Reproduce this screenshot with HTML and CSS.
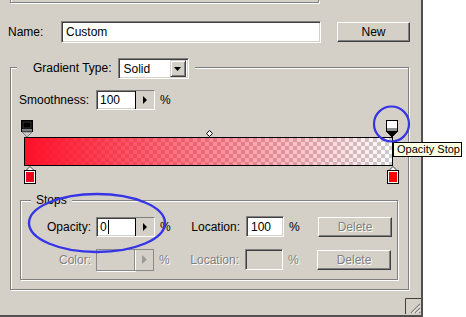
FILE: index.html
```html
<!DOCTYPE html>
<html lang="en">
<head>
    <meta charset="UTF-8">
    <title>Gradient Editor</title>
    <link rel="stylesheet" href="styles.css">
</head>
<body>
<div class="screen">
    <div class="dialog">
        <div class="prev"></div>

        <div class="name-row">
            <span class="name-lbl">Name:</span>
            <div class="field name-field">Custom</div>
            <div class="btn new">New</div>
        </div>

        <fieldset class="group">
            <legend class="type">
                <span class="type-lbl">Gradient Type:</span>
                <div class="field select">
                    <span>Solid</span>
                    <span class="drop">
                        <svg width="7" height="4" viewBox="0 0 7 4"><path d="M0 0h7L3.5 4z" fill="#000"/></svg>
                    </span>
                </div>
            </legend>

            <div class="smooth-row">
                <span class="smooth-lbl">Smoothness:</span>
                <div class="field spin">
                    <span class="val">100</span>
                    <span class="arrow"><svg width="4" height="8" viewBox="0 0 4 8"><path d="M0 0v8l4-4z" fill="#000"/></svg></span>
                </div>
                <span class="pct">%</span>
            </div>

            <div class="ramp">
                <!-- opacity stops -->
                <svg class="stop top-left" width="14" height="17" viewBox="0 0 14 17">
                    <rect x="1.5" y="0.5" width="11" height="11" fill="#000" stroke="#000"/>
                    <rect x="3" y="2" width="8" height="6" fill="#000" stroke="#555" stroke-width="0.6"/>
                    <rect x="2" y="9" width="10" height="2" fill="#808080"/>
                    <path d="M2 12h10l-5 5z" fill="#c8c8c8" stroke="#808080"/>
                </svg>
                <svg class="stop top-right" width="14" height="17" viewBox="0 0 14 17">
                    <rect x="1.5" y="0.5" width="11" height="11" fill="#fff" stroke="#000"/>
                    <rect x="2" y="8" width="10" height="3" fill="#909090"/>
                    <path d="M2 12h10l-5 5z" fill="#000" stroke="#000"/>
                </svg>
                <svg class="mid" width="7" height="7" viewBox="0 0 7 7">
                    <path d="M3.5 0.5L6.5 3.5L3.5 6.5L0.5 3.5Z" fill="#fff" stroke="#000"/>
                </svg>

                <div class="bar"></div>

                <!-- color stops -->
                <svg class="stop bottom-left" width="12" height="18" viewBox="0 0 12 18">
                    <path d="M6 0.5L11 5.5H1Z" fill="#fff" stroke="#404040"/>
                    <rect x="0.5" y="4.5" width="11" height="13" fill="#fff" stroke="#000"/>
                    <rect x="2" y="6" width="8" height="10" fill="#e8001c"/>
                </svg>
                <svg class="stop bottom-right" width="12" height="18" viewBox="0 0 12 18">
                    <path d="M6 0.5L11 5.5H1Z" fill="#fff" stroke="#404040"/>
                    <rect x="0.5" y="4.5" width="11" height="13" fill="#fff" stroke="#000"/>
                    <rect x="2" y="6" width="8" height="10" fill="#f00"/>
                </svg>

                <div class="tip">Opacity Stop</div>
            </div>

            <fieldset class="stops">
                <legend>Stops</legend>
                <div class="srow first">
                    <span class="slbl">Opacity:</span>
                    <div class="field spin">
                        <span class="val">0<i class="caret"></i></span>
                        <span class="arrow"><svg width="4" height="8" viewBox="0 0 4 8"><path d="M0 0v8l4-4z" fill="#000"/></svg></span>
                    </div>
                    <span class="pct">%</span>
                    <span class="slbl loc">Location:</span>
                    <div class="field loc-field">100</div>
                    <span class="pct">%</span>
                    <div class="btn del off">Delete</div>
                </div>
                <div class="srow off">
                    <span class="slbl">Color:</span>
                    <div class="swatch">
                        <span class="sw-box"></span>
                        <span class="sw-arrow"><svg width="5" height="9" viewBox="0 0 5 9"><path d="M0 0v9l5-4.5z" fill="#9a9a9a"/></svg></span>
                    </div>
                    <span class="pct">%</span>
                    <span class="slbl loc">Location:</span>
                    <div class="field loc-field blank"></div>
                    <span class="pct">%</span>
                    <div class="btn del">Delete</div>
                </div>
            </fieldset>
        </fieldset>

        <div class="grip-row">
            <svg width="16" height="16" viewBox="0 0 16 16">
                <path d="M0.5 16V0.5H16" fill="none" stroke="#404040"/>
                <path d="M15 6L6 15M15 10L10 15M15 14L14 15" stroke="#808080" stroke-width="1.2"/>
                <path d="M15 7.5L7.5 15M15 11.5L11.5 15" stroke="#fff"/>
            </svg>
        </div>
    </div>

    <svg class="marks" width="466" height="317" viewBox="0 0 466 317">
        <ellipse cx="391.5" cy="124" rx="17.5" ry="17.5" fill="none" stroke="#3535e6" stroke-width="2.2"/>
        <ellipse cx="97" cy="223" rx="68" ry="29" fill="none" stroke="#3535e6" stroke-width="2.4"/>
    </svg>
</div>
</body>
</html>
```

FILE: styles.css
```css
body {
    margin: 0;
    background-color: #fff;
    font-family: "Liberation Sans", Arial, sans-serif;
    font-size: 12px;
    color: #000;
}

.screen {
    position: relative;
    width: 466px;
    height: 317px;
    overflow: hidden;
}

.dialog {
    width: 421px;
    height: 315px;
    background-color: #d4d0c8;
    border-right: 2px solid #505050;
    border-bottom: 2px solid #505050;
    display: flex;
    flex-direction: column;
    align-items: flex-start;
}

.prev {
    margin-left: 10px;
    width: 307px;
    height: 2px;
    border: 1px solid #808080;
    border-top: none;
    box-shadow: inset 1px 0 0 #fff, 1px 1px 0 #fff;
}

/* sunken edit box */
.field {
    box-sizing: border-box;
    background-color: #fff;
    border: 1px solid;
    border-color: #808080 #fff #fff #808080;
    box-shadow: inset 1px 1px 0 #404040, inset -1px -1px 0 #d4d0c8;
    display: flex;
    align-items: center;
}

/* raised push button */
.btn {
    box-sizing: border-box;
    background-color: #d4d0c8;
    border: 1px solid;
    border-color: #fff #404040 #404040 #fff;
    box-shadow: inset -1px -1px 0 #808080;
    display: flex;
    align-items: center;
    justify-content: center;
}

.name-row {
    display: flex;
    align-items: center;
    height: 22px;
    margin-top: 18px;
    padding-left: 8px;
}

.name-lbl {
    width: 53px;
}

.name-field {
    width: 260px;
    height: 22px;
    padding-left: 4px;
}

.new {
    width: 73px;
    height: 20px;
    margin-left: 16px;
}

.group {
    box-sizing: border-box;
    margin: 15px 0 0 10px;
    padding: 0;
    width: 399px;
    height: 232px;
    min-width: 0;
    border: 1px solid #808080;
    box-shadow: inset 1px 1px 0 #fff, 1px 1px 0 #fff;
}

.type {
    display: flex;
    align-items: flex-start;
    height: 19px;
    margin-left: 6px;
    padding: 0 6px 0 16px;
    background-color: #d4d0c8;
}

.type-lbl {
    line-height: 21px;
}

.select {
    width: 71px;
    height: 21px;
    margin-left: 6px;
    padding-left: 5px;
    flex-shrink: 0;
}

.drop {
    box-sizing: border-box;
    width: 16px;
    height: 17px;
    margin-left: auto;
    margin-right: 2px;
    background-color: #d4d0c8;
    border: 1px solid;
    border-color: #d4d0c8 #404040 #404040 #d4d0c8;
    box-shadow: inset 1px 1px 0 #fff, inset -1px -1px 0 #808080;
    display: flex;
    align-items: center;
    justify-content: center;
}

.smooth-row {
    display: flex;
    align-items: center;
    height: 20px;
    margin-top: 13px;
    padding-left: 8px;
}

.smooth-lbl {
    width: 77px;
}

.spin {
    width: 59px;
    height: 20px;
}

.spin .val {
    flex: 1;
    padding-left: 3px;
    display: flex;
    align-items: center;
}

.spin .arrow {
    box-sizing: border-box;
    width: 19px;
    height: 100%;
    background-color: #d4d0c8;
    border-left: 1px solid #000;
    display: flex;
    align-items: center;
    justify-content: center;
}

.caret {
    display: inline-block;
    width: 1px;
    height: 14px;
    margin-left: 1px;
    background-color: #000;
}

.pct {
    margin-left: 5px;
    width: 10px;
}

.ramp {
    position: relative;
    box-sizing: border-box;
    width: 378px;
    height: 64px;
    margin: 10px 0 0 9px;
    padding: 17px 0 0 4px;
}

.bar {
    box-sizing: border-box;
    width: 369px;
    height: 29px;
    border: 1px solid #000;
    background:
        linear-gradient(to right, rgba(255, 16, 40, 1), rgba(255, 16, 40, 0)),
        repeating-conic-gradient(#cccccc 0 25%, #ffffff 0 50%) 0 0 / 8px 8px;
}

.stop,
.mid {
    position: absolute;
}

.top-left { left: 0; top: 0; }
.top-right { left: 365px; top: 0; }
.mid { left: 186px; top: 10px; }
.bottom-left { left: 4px; top: 46px; }
.bottom-right { left: 367px; top: 46px; }

.tip {
    position: absolute;
    left: 373px;
    top: 22px;
    box-sizing: border-box;
    width: 69px;
    height: 15px;
    padding-left: 3px;
    border: 1px solid #000;
    background-color: #ffffe1;
    font-size: 11px;
    line-height: 13px;
    white-space: nowrap;
}

.stops {
    box-sizing: border-box;
    margin: 9px 0 0 9px;
    padding: 0;
    width: 378px;
    height: 87px;
    min-width: 0;
    border: 1px solid #808080;
    box-shadow: inset 1px 1px 0 #fff, 1px 1px 0 #fff;
}

.stops legend {
    margin-left: 10px;
    padding: 0 5px;
    line-height: 14px;
    background-color: #d4d0c8;
}

.srow {
    display: flex;
    align-items: center;
    height: 21px;
    margin-top: 12px;
}

.srow.first {
    margin-top: 9px;
}

.slbl {
    width: 70px;
    margin-right: 5px;
    text-align: right;
}

.slbl.loc {
    width: 70px;
    margin-right: 6px;
}

.loc-field {
    width: 38px;
    height: 21px;
    padding-left: 4px;
}

.loc-field.blank {
    background-color: #d4d0c8;
}

.del {
    width: 74px;
    height: 20px;
    margin-left: 19px;
}

.off,
.srow.off .slbl,
.srow.off .pct {
    color: #808080;
    text-shadow: 1px 1px 0 #fff;
}

.srow.off .del {
    color: #808080;
    text-shadow: 1px 1px 0 #fff;
}

.swatch {
    display: flex;
    width: 58px;
    height: 22px;
}

.sw-box {
    box-sizing: border-box;
    width: 39px;
    height: 100%;
    border: 1px solid #8a8a8a;
    box-shadow: 1px 1px 0 #fff;
}

.sw-arrow {
    box-sizing: border-box;
    width: 19px;
    height: 100%;
    border: 1px solid #8a8a8a;
    border-left: none;
    display: flex;
    align-items: center;
    justify-content: center;
}

.grip-row {
    align-self: flex-end;
    margin-top: 8px;
    height: 16px;
}

.grip-row svg {
    display: block;
}

.marks {
    position: absolute;
    left: 0;
    top: 0;
    pointer-events: none;
}
```
